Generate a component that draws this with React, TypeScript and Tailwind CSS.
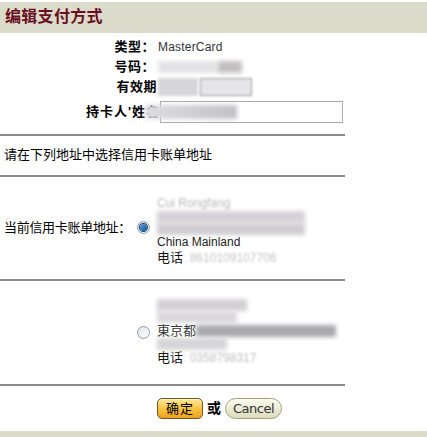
import React from 'react';

const cjk = "font-['Liberation_Sans','Noto_Sans_CJK_SC',sans-serif]";

function Blur({ w, tone = 'bg-[#c9c9cd]' }: { w: string; tone?: string }) {
  return <span className={`inline-block h-[12px] align-middle blur-[2px] ${tone} ${w}`} />;
}

function Radio({ checked }: { checked?: boolean }) {
  return (
    <span className="flex h-[13px] w-[13px] items-center justify-center rounded-full border border-[#8d9cab] bg-gradient-to-br from-[#dde3e8] to-[#ffffff]">
      {checked && <span className="h-[7px] w-[7px] rounded-full bg-gradient-to-br from-[#5fa3de] to-[#0d4f8b] ring-1 ring-[#0d3e6e]" />}
    </span>
  );
}

export default function App() {
  return (
    <div className={`w-[427px] h-[437px] bg-white text-[12px] text-black ${cjk} flex flex-col`}>
      <div className="mt-[2px] h-[31px] bg-[#dadbcb] flex items-center pl-[5px]">
        <h1 className="text-[16px] font-bold text-[#6b0f22] tracking-[0.3px]">编辑支付方式</h1>
      </div>

      <div className="w-[345px]">
        <div className="pt-[4px] pb-[11px]">
          <div className="flex h-[20px] items-center">
            <div className="w-[155px] text-right font-bold text-[13px] tracking-[0.5px]">类型：</div>
            <div className="pl-[3px] text-[#333] tracking-[0.2px]">MasterCard</div>
          </div>
          <div className="flex h-[20px] items-center">
            <div className="w-[155px] text-right font-bold text-[13px] tracking-[0.5px]">号码：</div>
            <div className="pl-[3px] flex items-center">
              <Blur w="w-[60px]" tone="bg-[#e3e3e6]" />
              <Blur w="w-[24px]" tone="bg-[#c3bfc0]" />
            </div>
          </div>
          <div className="flex h-[20px] items-center">
            <div className="w-[157px] text-right font-bold text-[13px] tracking-[0.5px]">有效期</div>
            <div className="flex items-center gap-[2px] pl-[1px]">
              <span className="h-[18px] w-[40px] bg-[#d6d6d8] blur-[1.5px]" />
              <span className="h-[18px] w-[52px] border border-[#9a9a9a] bg-[#e6e6e8] blur-[1px]" />
            </div>
          </div>
          <div className="mt-[4px] flex h-[22px] items-center">
            <div className="w-[160px] text-right font-bold text-[13px] tracking-[1px] whitespace-nowrap">持卡人'姓名</div>
            <div className="relative h-[22px] w-[183px] border border-[#a9a9a9] bg-white">
              <span className="absolute left-[-16px] top-[3px] h-[14px] w-[92px] bg-gradient-to-r from-[#dedee0] to-[#c2c2c5] blur-[2px]" />
            </div>
          </div>
        </div>

        <div className="h-[2px] bg-[#8a8a8a]" />
        <div className="flex h-[39px] items-center pl-[4px] text-[13px]">请在下列地址中选择信用卡账单地址</div>
        <div className="h-[2px] bg-[#8a8a8a]" />

        <div className="flex h-[102px] items-center">
          <div className="w-[137px] pl-[4px] text-[13px] tracking-[-0.3px] whitespace-nowrap">当前信用卡账单地址：</div>
          <Radio checked />
          <div className="ml-[7px] flex flex-col leading-[15px] pt-[6px]">
            <span className="text-[#b8b8b8] blur-[1px]">Cui Rongfang</span>
            <span className="flex"><Blur w="w-[148px]" tone="bg-[#d4d2d8]" /></span>
            <span className="flex"><Blur w="w-[148px]" tone="bg-[#cfcdd2]" /></span>
            <span className="text-[#222]">China Mainland</span>
            <span className="text-[#111] text-[13px]">电话<span className="text-[12px] text-[#c4c4c8] blur-[1px]">: 8610109107706</span></span>
          </div>
        </div>
        <div className="h-[2px] bg-[#8a8a8a]" />

        <div className="flex h-[103px] items-center">
          <div className="w-[137px]" />
          <Radio />
          <div className="ml-[7px] flex flex-col leading-[15px]">
            <span className="flex"><Blur w="w-[90px]" tone="bg-[#d3d0d3]" /></span>
            <span className="flex"><Blur w="w-[80px]" tone="bg-[#dad8dc]" /></span>
            <span className="text-[#333] text-[13px]">東京都<Blur w="w-[140px]" tone="bg-[#a9a9ad]" /></span>
            <span className="flex"><Blur w="w-[70px]" tone="bg-[#d6d6d8]" /></span>
            <span className="text-[#111] text-[13px]">电话<span className="text-[12px] text-[#c0c0c4] blur-[1px]">: 0358798317</span></span>
          </div>
        </div>
        <div className="h-[2px] bg-[#8a8a8a]" />
      </div>

      <div className="flex h-[46px] items-center pl-[157px] gap-[3px]">
        <button className="h-[21px] w-[46px] rounded-[5px] border border-[#6d5420] bg-gradient-to-b from-[#fde793] via-[#f8c445] to-[#eea118] text-[13px] text-black shadow-[inset_0_1px_0_#fff6c8] tracking-[1px]">
          确定
        </button>
        <span className="font-bold text-[14px] px-[1px]">或</span>
        <button className="h-[21px] w-[57px] rounded-full border border-[#a3a182] bg-gradient-to-b from-[#fbfbef] to-[#dcdcbc] text-[13px] text-[#333] font-['DejaVu_Sans',sans-serif] tracking-[-0.5px]">
          Cancel
        </button>
      </div>

      <div className="mt-auto h-[6px] bg-[#dadbcb]" />
    </div>
  );
}
